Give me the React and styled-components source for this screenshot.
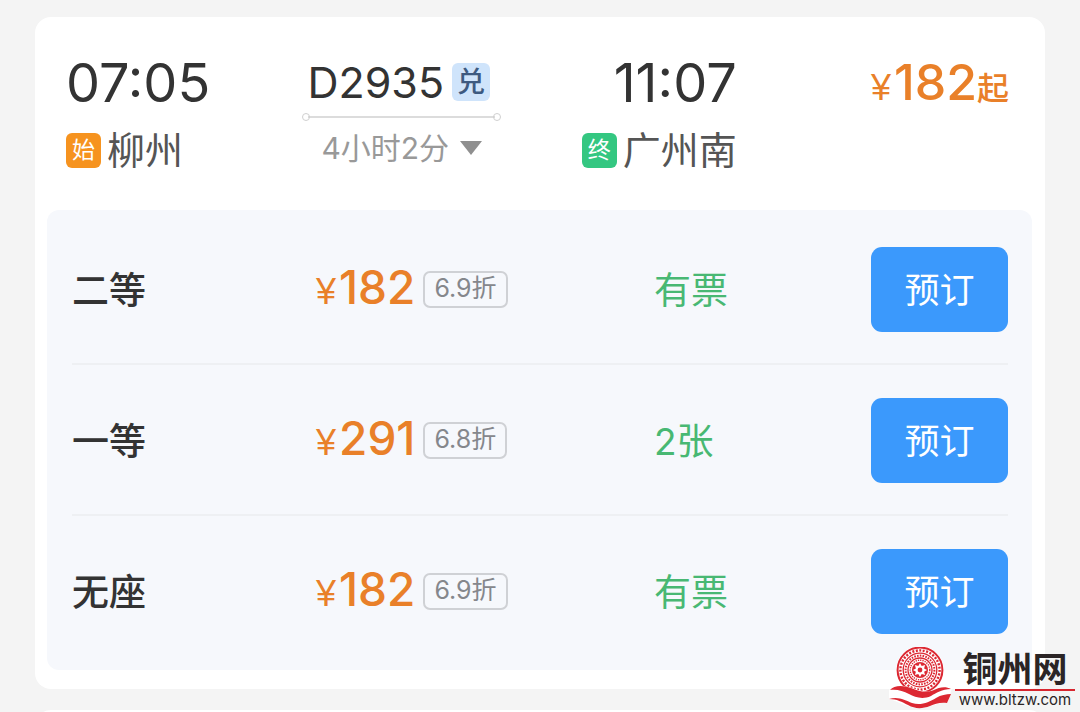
import React, { useState } from "react";
import styled, { createGlobalStyle } from "styled-components";

const seats = [
  { name: "二等", price: 182, discount: "6.9折", stock: "有票" },
  { name: "一等", price: 291, discount: "6.8折", stock: "2张" },
  { name: "无座", price: 182, discount: "6.9折", stock: "有票" },
];

const Logo = () => (
  <svg width="64" height="62" viewBox="0 0 64 62" aria-hidden="true">
    <circle cx="31" cy="23" r="24" fill="#fff" />
    <g fill="none" stroke="#dc2832">
      <circle cx="31" cy="23" r="22.4" strokeWidth="2" />
      <circle cx="31" cy="23" r="19.6" strokeWidth="2.4" strokeDasharray="2 1.5" />
      <circle cx="31" cy="23" r="16.8" strokeWidth="1.3" />
      <circle cx="31" cy="23" r="14.4" strokeWidth="2" strokeDasharray="1.6 1.2" />
      <circle cx="31" cy="23" r="12" strokeWidth="1.3" />
      <circle cx="31" cy="23" r="9.8" strokeWidth="1.4" strokeDasharray="1.3 1" />
    </g>
    <circle cx="31" cy="23" r="8" fill="#dc2832" />
    <path
      fill="#fff"
      d="M31 16l1.7 3 3.4-1-1 3.4 3 1.6-3 1.7 1 3.4-3.4-1-1.7 3-1.7-3-3.4 1 1-3.4-3-1.7 3-1.6-1-3.4 3.4 1z"
    />
    <circle cx="31" cy="23" r="2.4" fill="#dc2832" />
    <path
      fill="#fff"
      d="M0 43c4-5 12-5 20-3 10 3 18 7 27 3 6-3 11-4 16-2l-4 14c-9 0-18 6-28 6-12 0-20-6-31-9z"
    />
    <path
      fill="#dc2832"
      d="M1 43c4-5 13-5 21-2 9 4 16 5 23 2 5-3 12-4 17-1-9 0-15 4-20 7 -9 4-16 1-22-2-6-3-12-5-19-4z"
    />
    <path
      fill="#dc2832"
      d="M0 52c9-3 16 1 23 4 9 3 17-1 24-5 5-3 10-4 15-4l-4 9c-7-1-12 1-17 3-8 3-15 3-22-1-6-3-11-6-19-6z"
    />
    <path fill="#fff" d="M6 46c8 0 13 4 18 6 3 1 5 1 7 1-7 2-12-1-15-3-4-2-6-3-10-4z" />
  </svg>
);

const App = () => {
  const [open, setOpen] = useState(true);

  return (
    <Page>
      <GlobalStyle />
      <Card>
        <Header>
          <Station>
            <Time>07:05</Time>
            <City>
              <Tag color="#f6931f">始</Tag>
              柳州
            </City>
          </Station>
          <Train>
            <TrainNo>
              D2935
              <Exchange>兑</Exchange>
            </TrainNo>
            <Route />
            <Duration type="button" onClick={() => setOpen(!open)}>
              4小时2分
              <Caret />
            </Duration>
          </Train>
          <Station $end>
            <Time>11:07</Time>
            <City>
              <Tag color="#34c781">终</Tag>
              广州南
            </City>
          </Station>
          <FromPrice>
            <Yen>¥</Yen>182<From>起</From>
          </FromPrice>
        </Header>
        {open && (
          <SeatList>
            {seats.map((seat) => (
              <SeatRow key={seat.name}>
                <SeatName>{seat.name}</SeatName>
                <PriceCell>
                  <Price>
                    <Yen>¥</Yen>
                    {seat.price}
                  </Price>
                  <Discount>{seat.discount}</Discount>
                </PriceCell>
                <Stock>{seat.stock}</Stock>
                <BookButton type="button">预订</BookButton>
              </SeatRow>
            ))}
          </SeatList>
        )}
      </Card>
      <NextCard />
      <Watermark>
        <Logo />
        <SiteText>
          <SiteName>铜州网</SiteName>
          <SiteUrl>www.bltzw.com</SiteUrl>
        </SiteText>
      </Watermark>
    </Page>
  );
};

const GlobalStyle = createGlobalStyle`
  * {
    box-sizing: border-box;
  }

  body {
    margin: 0;
    background-color: #f4f4f4;
    color: #333;
    font-family: Inter, "Noto Sans CJK SC", sans-serif;
  }

  button {
    font-family: inherit;
  }
`;

const Page = styled.main`
  position: relative;
  height: 100vh;
  min-height: 712px;
  overflow: hidden;
  padding: 17px 35px 0;
`;

const Card = styled.section`
  background-color: #fff;
  border-radius: 16px;
  padding: 36px 13px 19px 12px;
`;

const NextCard = styled.section`
  height: 60px;
  margin-top: 21px;
  background-color: #fff;
  border-radius: 16px;
`;

const Header = styled.header`
  display: grid;
  grid-template-columns: 236fr 279fr 155fr 272fr;
  height: 157px;
  padding: 0 23px 0 19px;
  align-items: start;
`;

const Station = styled.div`
  display: flex;
  flex-direction: column;
  align-items: ${(props) => (props.$end ? "flex-end" : "flex-start")};
`;

const Time = styled.div`
  font-size: 54px;
  line-height: 60px;
`;

const City = styled.div`
  display: flex;
  align-items: center;
  gap: 6px;
  height: 44px;
  margin-top: 15px;
  color: #555;
  font-size: 38px;
  line-height: 44px;
  white-space: nowrap;
`;

const Tag = styled.span`
  width: 35px;
  height: 35px;
  border-radius: 6px;
  background-color: ${(props) => props.color};
  color: #fff;
  font-size: 23px;
  line-height: 34px;
  text-align: center;
`;

const Train = styled.div`
  display: flex;
  flex-direction: column;
  align-items: center;
  width: 199px;
`;

const TrainNo = styled.div`
  display: flex;
  align-items: center;
  gap: 8px;
  padding-right: 6px;
  font-size: 43px;
  line-height: 58px;
`;

const Exchange = styled.span`
  width: 38px;
  height: 38px;
  border-radius: 6px;
  background-color: #cfe4fb;
  color: #3d5a80;
  font-size: 28px;
  font-weight: 500;
  line-height: 38px;
  text-align: center;
`;

const Route = styled.div`
  display: flex;
  align-items: center;
  justify-content: space-between;
  width: 100%;
  height: 6px;
  margin-top: 3px;
  background: linear-gradient(#dcdcdc, #dcdcdc) center / calc(100% - 12px) 2px
    no-repeat;

  &::before,
  &::after {
    content: "";
    width: 6px;
    height: 6px;
    border: 1px solid #d0d0d0;
    border-radius: 50%;
  }
`;

const Duration = styled.button`
  display: flex;
  align-items: center;
  gap: 11px;
  padding: 0;
  margin-top: 8px;
  border: 0;
  background: none;
  color: #999;
  font-size: 30px;
  line-height: 40px;
  white-space: nowrap;
  cursor: pointer;
`;

const Caret = styled.span`
  border: 11px solid transparent;
  border-top: 14px solid #8f8f8f;
  border-bottom: 0;
`;

const FromPrice = styled.div`
  color: #e98029;
  font-size: 50px;
  font-weight: 500;
  line-height: 58px;
  text-align: right;
  white-space: nowrap;
`;

const Yen = styled.span`
  margin-right: 3px;
  font-family: "Liberation Sans", sans-serif;
  font-size: 36px;
  font-weight: 400;
`;

const From = styled.span`
  font-size: 32px;
`;

const SeatList = styled.ul`
  margin: 0;
  padding: 4px 24px 3px 25px;
  border-radius: 12px;
  background-color: #f6f8fc;
  list-style: none;
`;

const SeatRow = styled.li`
  display: grid;
  grid-template-columns: 244fr 338fr 217fr 137px;
  align-items: center;
  height: 151px;
  padding-top: 2px;
  border-bottom: 2px solid #eef0f3;

  &:last-child {
    border-bottom-color: transparent;
  }
`;

const SeatName = styled.div`
  padding-bottom: 4px;
  font-size: 37px;
  font-weight: 500;
`;

const PriceCell = styled.div`
  display: flex;
  align-items: center;
  gap: 8px;
`;

const Price = styled.div`
  color: #e98029;
  font-size: 46px;
  font-weight: 500;
  line-height: 58px;
`;

const Discount = styled.span`
  height: 37px;
  padding: 0 9px;
  border: 2px solid #cfd1d5;
  border-radius: 7px;
  color: #85878c;
  font-size: 25px;
  line-height: 31px;
`;

const Stock = styled.div`
  padding-bottom: 4px;
  color: #48b873;
  font-size: 37px;
`;

const BookButton = styled.button`
  height: 85px;
  padding: 0 0 4px;
  border: 0;
  border-radius: 11px;
  background-color: #3b99fc;
  color: #fff;
  font-size: 35px;
  cursor: pointer;
`;

const Watermark = styled.aside`
  position: absolute;
  right: 5px;
  bottom: 3px;
  display: flex;
  align-items: flex-end;
  gap: 2px;
`;

const SiteText = styled.div`
  width: 120px;
  color: #2b2526;
  text-align: center;
`;

const SiteName = styled.div`
  height: 40px;
  border-bottom: 2px solid #d7262f;
  font-size: 35px;
  font-weight: 700;
  line-height: 36px;
`;

const SiteUrl = styled.div`
  font-size: 15px;
  line-height: 18px;
`;

export default App;
